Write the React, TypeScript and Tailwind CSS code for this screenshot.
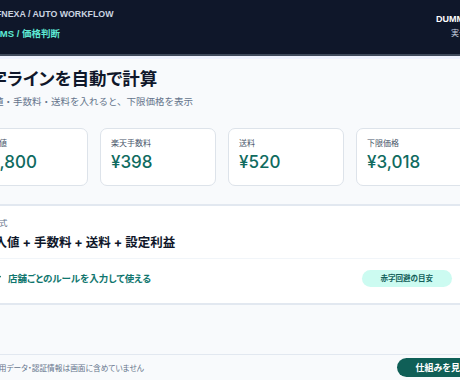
import { Check } from "lucide-react";

const cards = [
  { label: "仕入値", value: "¥1,800" },
  { label: "楽天手数料", value: "¥398" },
  { label: "送料", value: "¥520" },
  { label: "下限価格", value: "¥3,018" },
];

export default function App() {
  return (
    <div className="h-[380px] w-[460px] overflow-hidden bg-[#f8fafc] font-['Inter','Noto_Sans_CJK_JP',sans-serif] [font-feature-settings:'palt']">
      <div className="-ml-[40px] w-[560px]">
        {/* header */}
        <header className="flex h-[56px] justify-between border-b-2 border-[#3f4a5c] bg-[#0f172a] pl-[36px] pr-[24px] font-['Liberation_Sans','Noto_Sans_CJK_JP',sans-serif]">
          <div className="pt-[8px]">
            <div className="text-[8.8px] font-bold leading-[12px] text-[#cbd5e1]">
              FNEXA / AUTO WORKFLOW
            </div>
            <div className="-ml-[3px] mt-[8px] text-[9.5px] font-bold leading-[12px] text-[#5eead4]">
              RMS / 価格判断
            </div>
          </div>
          <div className="flex flex-col items-end pt-[13px]">
            <div className="text-[9px] font-bold leading-[12px] text-white">DUMMY DATA</div>
            <div className="mt-[3px] text-[8px] leading-[12px] text-[#cbd5e1]">実データなし</div>
          </div>
        </header>

        {/* summary */}
        <section className="border-t-[3px] border-[#eef2ff] pb-[18px] pl-[12px] pt-[6px]">
          <h1 className="text-[17.5px] font-bold leading-[28px] text-[#0f172a]">赤字ラインを自動で計算</h1>
          <p className="ml-[3px] mt-[1px] text-[9.5px] leading-[16px] text-[#64748b] [font-feature-settings:normal]">
            仕入値・手数料・送料を入れると、下限価格を表示
          </p>
          <div className="mt-[18px] grid w-[500px] grid-cols-4 gap-[12px]">
            {cards.map((c) => (
              <div
                key={c.label}
                className="h-[58px] rounded-[7px] border border-[#dde3ea] bg-white px-[10px] pt-[8px]"
              >
                <div className="text-[8px] leading-[12px] text-[#475569]">{c.label}</div>
                <div className="mt-[1px] text-[17px] font-medium leading-[24px] text-[#0f6b5f]">{c.value}</div>
              </div>
            ))}
          </div>
        </section>

        {/* formula */}
        <section className="ml-[12px] w-[500px] border-y-2 border-[#e2e8f0] bg-white">
          <div className="pb-[5px] pl-[10px] pt-[11px]">
            <div className="text-[8.5px] leading-[12px] text-[#64748b]">計算式</div>
            <div className="mt-[4px] text-[12.5px] font-bold leading-[20px] text-[#0f172a]">
              仕入値 + 手数料 + 送料 + 設定利益
            </div>
          </div>
          <div className="flex items-center justify-between border-t border-[#f1f5f9] pb-[16px] pl-[20px] pr-[20px] pt-[11px]">
            <div className="flex items-center gap-[6px] text-[9.5px] font-bold leading-[17px] text-[#0f766e]">
              <Check size={10} strokeWidth={3} />
              店舗ごとのルールを入力して使える
            </div>
            <span className="flex h-[17px] items-center rounded-full bg-[#ccfbf1] px-[19px] text-[7.5px] font-bold text-[#115e59] [font-feature-settings:normal]">
              赤字回避の目安
            </span>
          </div>
        </section>

        <div className="h-[49px]" />

        {/* footer */}
        <footer className="flex items-start justify-between border-t border-[#e2e8f0] pl-[31px] pt-[3px]">
          <span className="pt-[5px] text-[7.7px] leading-[12px] text-[#64748b]">
            運用データ・認証情報は画面に含めていません
          </span>
          <button className="mr-[17px] h-[19px] rounded-full bg-[#0f5f57] px-[18px] text-[9px] font-bold text-white">
            仕組みを見える化
          </button>
        </footer>
      </div>
    </div>
  );
}
